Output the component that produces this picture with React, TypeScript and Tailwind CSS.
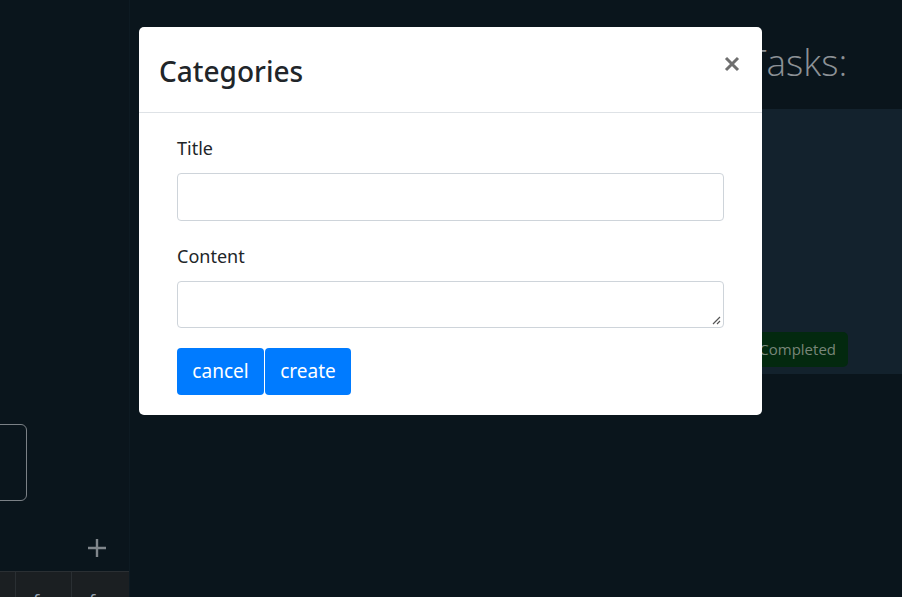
import React from "react";

export default function App() {
  return (
    <div className="relative w-[902px] h-[597px] overflow-hidden bg-[#0a151c]" style={{ fontFamily: '"Open Sans", sans-serif' }}>
      <div className="flex h-full">
        {/* sidebar */}
        <div className="w-[130px] h-full shrink-0 flex flex-col border-r border-[#0d1a22]">
          <div className="shrink-0 mt-[424px] ml-[-40px] w-[67px] h-[77px] rounded-[6px] border border-[#7b8186]" />
          <div className="shrink-0 mt-[34px] flex justify-end pr-[22px] h-[26px] items-center">
            <svg width="20" height="20" viewBox="0 0 20 20">
              <path d="M10 1v18M1 10h18" stroke="#80868b" strokeWidth="2.4" />
            </svg>
          </div>
          <div className="shrink-0 mt-[10px] flex h-[26px] overflow-hidden bg-[#1b1f22] border-t border-[#2a2f33]">
            <div className="w-[16px] border-r border-[#2a2f33]" />
            <div className="w-[56px] border-r border-[#2a2f33] pl-[17px] pt-[20px] text-[18px] text-[#9aa4b4] leading-none">f</div>
            <div className="w-[57px] pl-[17px] pt-[20px] text-[18px] text-[#9aa4b4] leading-none">f</div>
          </div>
        </div>
        {/* main */}
        <div className="flex-1 flex flex-col pl-[614px]">
          <div className="mt-[43px] h-[49px] text-[37px] font-light text-[#8c9196] leading-none pl-[3px]">Tasks:</div>
          <div className="mt-[17px] w-[160px] h-[265px] bg-[#13222d] flex flex-col justify-end pb-[7px]">
            <div className="w-[104px] h-[35px] rounded-[5px] bg-[#03290f] flex items-center justify-end pr-[12px] text-[15px] text-[#788679]">
              Completed
            </div>
          </div>
        </div>
      </div>

      {/* modal */}
      <div className="absolute left-[139px] top-[27px] w-[623px] h-[388px] bg-white rounded-[5px] flex flex-col" style={{ fontFamily: '"Noto Sans", "Open Sans", sans-serif' }}>
        <div className="h-[86px] border-b border-[#dee2e6] flex items-center justify-between pl-[20px] pr-[22px]">
          <div className="text-[28px] font-medium text-[#212529] pt-[2px]">Categories</div>
          <svg width="16" height="16" viewBox="0 0 16 16" className="mt-[-12px]">
            <path d="M2 2l12 12M14 2L2 14" stroke="#6f6f6f" strokeWidth="3" />
          </svg>
        </div>
        <div className="px-[38px] pt-[20px] flex flex-col">
          <label className="text-[18px] leading-[30px] text-[#212529] mb-[10px]">Title</label>
          <div className="h-[48px] rounded-[4px] border border-[#ced4da]" />
          <label className="mt-[20px] text-[18px] leading-[30px] text-[#212529] mb-[10px]">Content</label>
          <div className="relative h-[47px] rounded-[4px] border border-[#ced4da]">
            <svg width="10" height="10" viewBox="0 0 10 10" className="absolute right-[2px] bottom-[2px]">
              <path d="M9 2L2 9M9 6L6 9" stroke="#555" strokeWidth="1.2" />
            </svg>
          </div>
          <div className="mt-[20px] flex gap-[1px]">
            <button className="h-[47px] w-[87px] rounded-[4px] bg-[#007bff] text-white text-[19px]">cancel</button>
            <button className="h-[47px] w-[86px] rounded-[4px] bg-[#007bff] text-white text-[19px]">create</button>
          </div>
        </div>
      </div>
    </div>
  );
}
